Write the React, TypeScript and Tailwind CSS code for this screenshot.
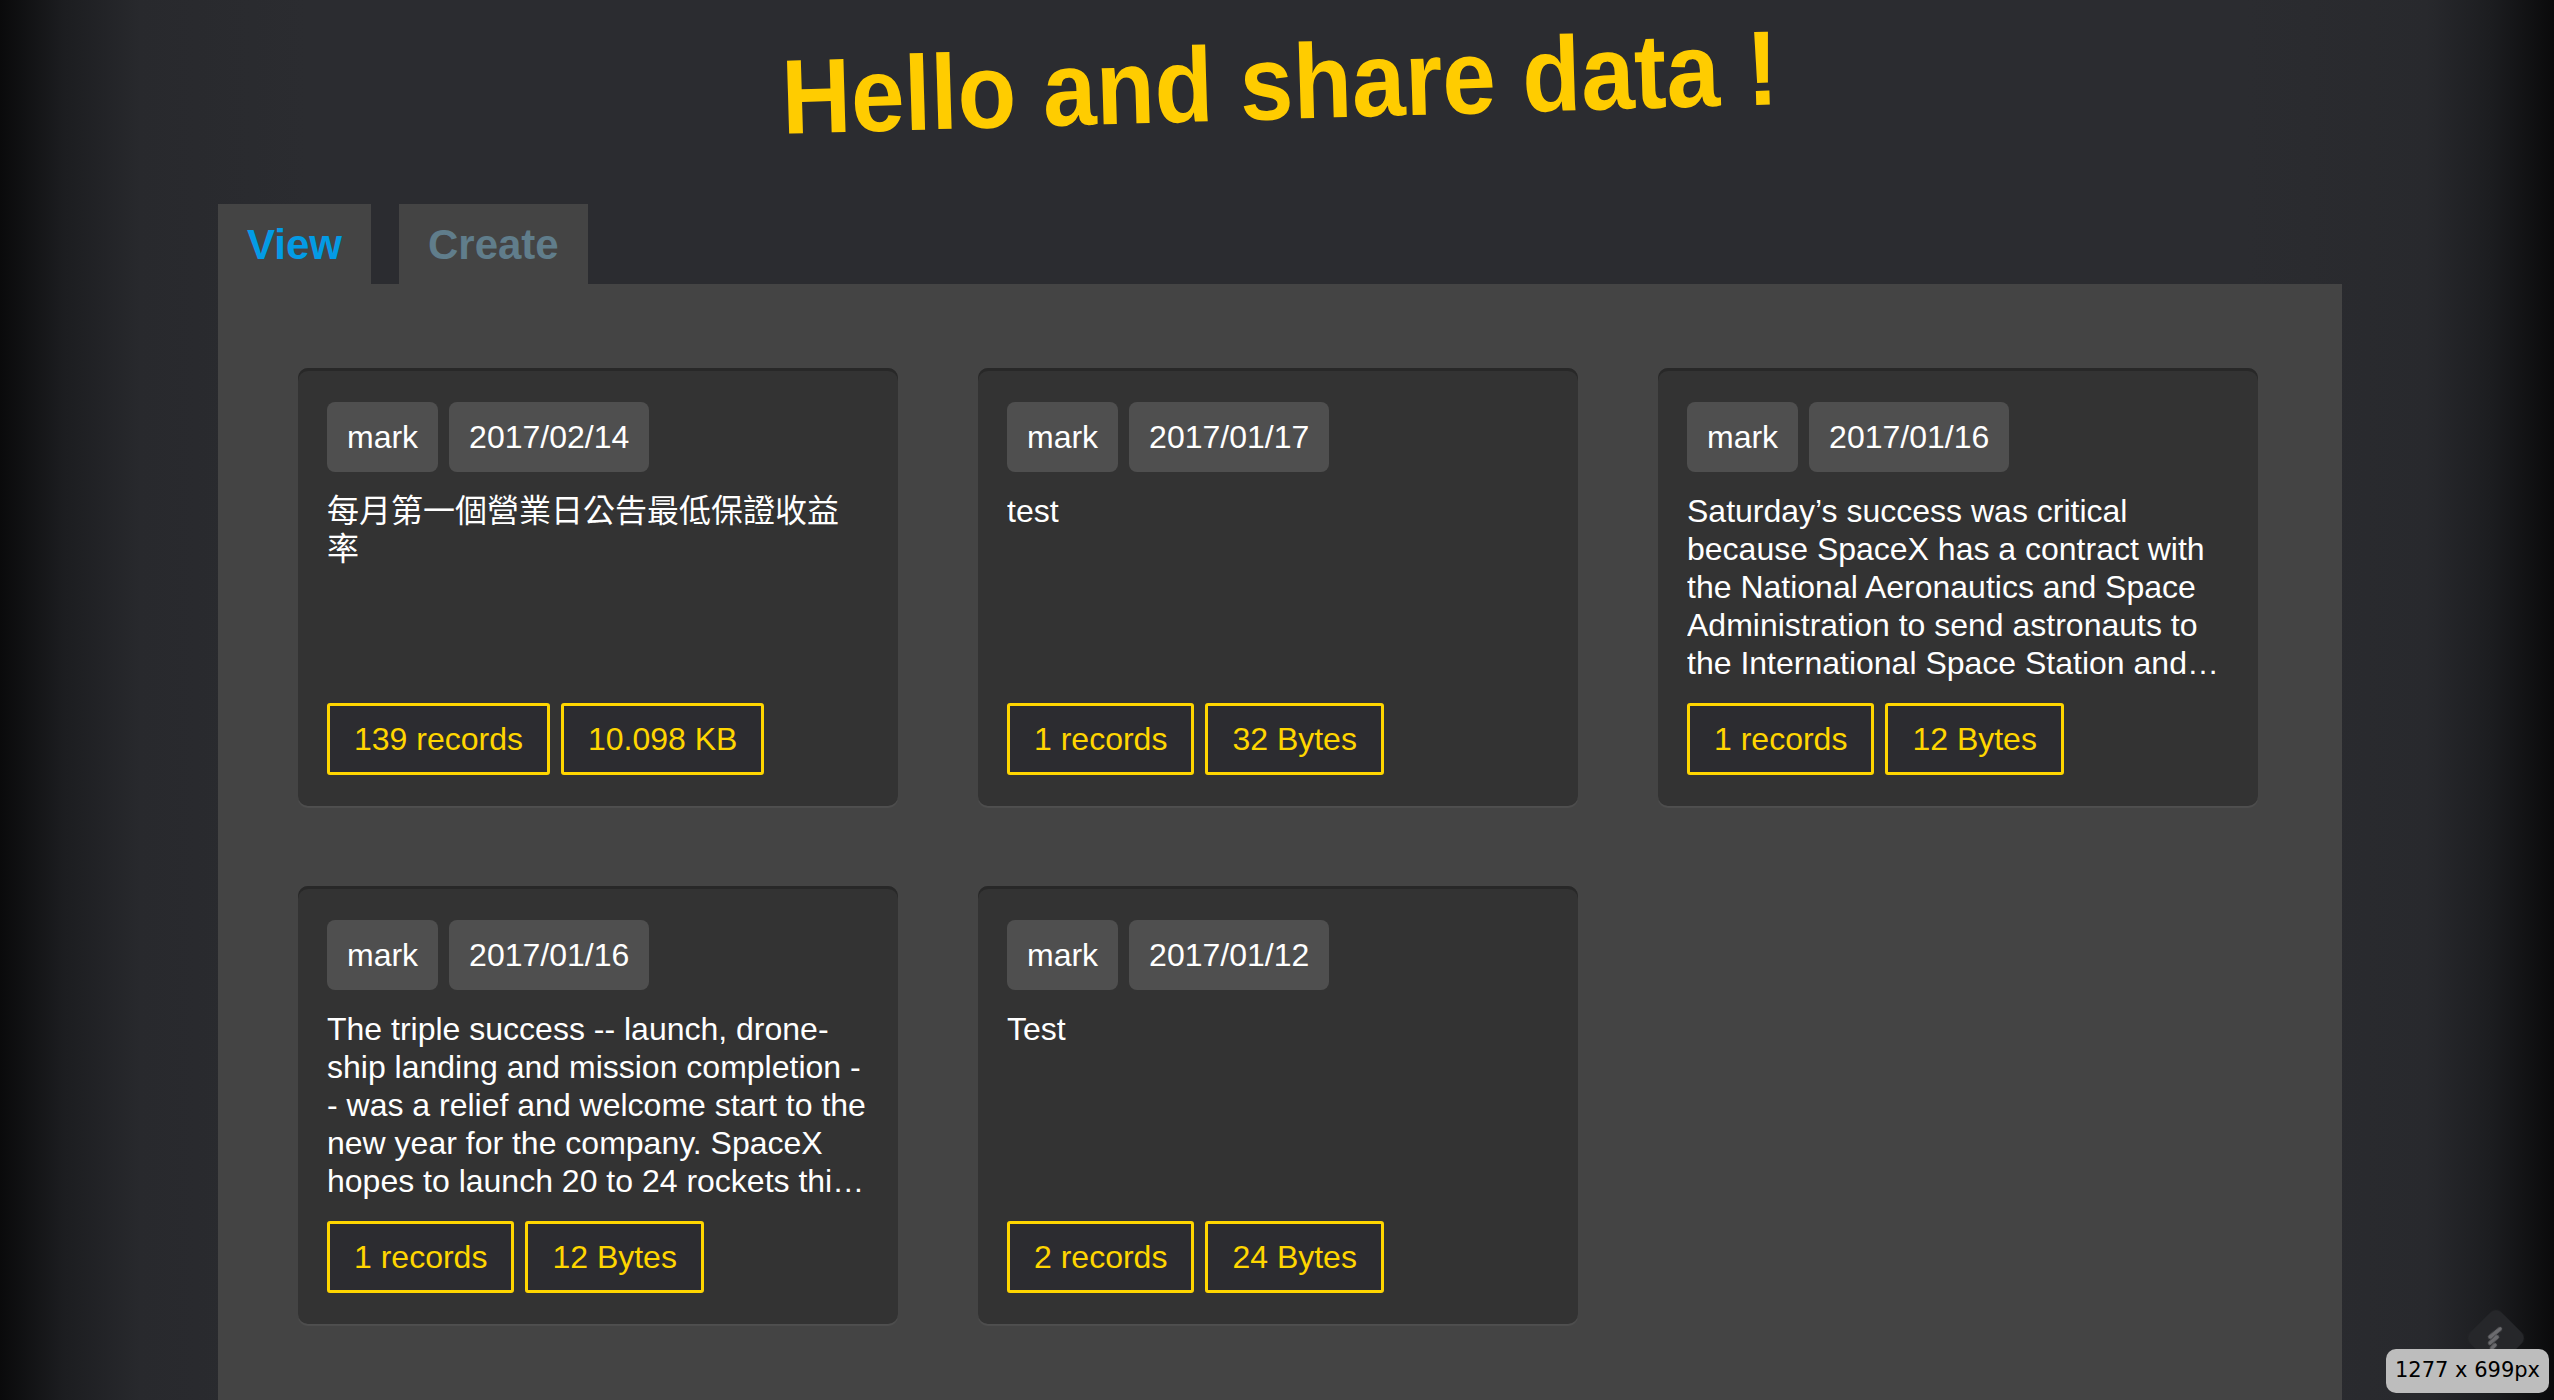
import React from 'react'

type Entry = {
  user: string
  date: string
  text: string
  records: string
  size: string
  cjk?: boolean
}

const entries: Entry[] = [
  {
    user: 'mark',
    date: '2017/02/14',
    text: '每月第一個營業日公告最低保證收益率',
    records: '139 records',
    size: '10.098 KB',
    cjk: true,
  },
  { user: 'mark', date: '2017/01/17', text: 'test', records: '1 records', size: '32 Bytes' },
  {
    user: 'mark',
    date: '2017/01/16',
    text: 'Saturday’s success was critical because SpaceX has a contract with the National Aeronautics and Space Administration to send astronauts to the International Space Station and bring cargo back to Earth.',
    records: '1 records',
    size: '12 Bytes',
  },
  {
    user: 'mark',
    date: '2017/01/16',
    text: 'The triple success -- launch, drone-ship landing and mission completion -- was a relief and welcome start to the new year for the company. SpaceX hopes to launch 20 to 24 rockets this year.',
    records: '1 records',
    size: '12 Bytes',
  },
  { user: 'mark', date: '2017/01/12', text: 'Test', records: '2 records', size: '24 Bytes' },
]

function Card({ entry }: { entry: Entry }) {
  return (
    <div className="m-[40px] flex h-[438px] w-[600px] flex-col rounded-[10px] bg-[#333333] px-[29px] pb-[31px] pt-[34px] shadow-[inset_0_3px_0_#282828,0_2px_1px_rgba(255,255,255,0.06)]">
      {/* tags */}
      <div className="flex gap-[11px]">
        <span className="flex h-[70px] items-center rounded-[8px] bg-[#4f4f4f] px-[20px] text-[32px] text-white">
          {entry.user}
        </span>
        <span className="flex h-[70px] items-center rounded-[8px] bg-[#4f4f4f] px-[20px] text-[32px] text-white">
          {entry.date}
        </span>
      </div>
      <p
        className={
          entry.cjk
            ? "mt-[20px] h-[192px] overflow-hidden font-['Liberation_Sans','Noto_Sans_CJK_TC',sans-serif] text-[32px] leading-[38px] text-white"
            : 'mt-[20px] line-clamp-5 h-[192px] text-[32px] leading-[38px] text-white'
        }
      >
        {entry.text}
      </p>
      {/* badges */}
      <div className="mt-auto flex gap-[11px]">
        <span className="flex h-[72px] items-center rounded-[3px] border-[3px] border-[#ffd600] bg-[#2c2c30] px-[24px] text-[32px] text-[#ffd600]">
          {entry.records}
        </span>
        <span className="flex h-[72px] items-center rounded-[3px] border-[3px] border-[#ffd600] bg-[#2c2c30] px-[24px] text-[32px] text-[#ffd600]">
          {entry.size}
        </span>
      </div>
    </div>
  )
}

export default function App() {
  return (
    <div className="min-h-screen w-full bg-[linear-gradient(to_right,#0a0a0b_0%,#1c1d20_2.5%,#28292d_5.5%,#2b2c30_12%,#2b2c30_88%,#28292d_95%,#1c1d20_97.5%,#0a0a0b_100%)] font-['Liberation_Sans',Arial,sans-serif]">
      {/* Header */}
      <header className="flex h-[204px] items-center justify-center">
        <h1 className="-translate-y-[20px] translate-x-[3px] rotate-[-1.7deg] scale-x-[0.905] text-[106px] font-bold leading-none text-[#ffcc00]">
          Hello and share data !
        </h1>
      </header>

      <div className="ml-[218px] w-[2124px]">
        {/* Tabs */}
        <div className="flex gap-[28px]">
          <div className="flex h-[80px] items-center bg-[#444444] px-[29px] text-[42px] font-bold text-[#039be5]">
            View
          </div>
          <div className="flex h-[80px] items-center bg-[#444444] px-[29px] text-[42px] font-bold text-[#607d8b]">
            Create
          </div>
        </div>
        {/* Content Section */}
        <div className="flex flex-wrap bg-[#444444] px-[40px] pb-[40px] pt-[44px]">
          {entries.map((e, i) => (
            <Card key={i} entry={e} />
          ))}
        </div>
      </div>

      {/* screenshot overlay */}
      <div className="fixed bottom-[40px] right-[36px] flex h-[44px] w-[44px] rotate-45 items-center justify-center rounded-[8px] bg-[#26272a]">
        <svg width="30" height="30" viewBox="0 0 30 30" className="-rotate-45">
          <path d="M9 14 L19 6" stroke="#6b6b6e" strokeWidth="4" strokeLinecap="round" />
          <path d="M9 20 L16 14" stroke="#6b6b6e" strokeWidth="4" strokeLinecap="round" />
          <path d="M11 25 L14 22" stroke="#6b6b6e" strokeWidth="4" strokeLinecap="round" />
        </svg>
      </div>
      <div className="fixed bottom-[7px] right-[5px] flex h-[44px] items-center rounded-[10px] bg-[#bdbdbd] px-[9px] font-['DejaVu_Sans',sans-serif] text-[21px] text-black">
        1277 x 699px
      </div>
    </div>
  )
}
